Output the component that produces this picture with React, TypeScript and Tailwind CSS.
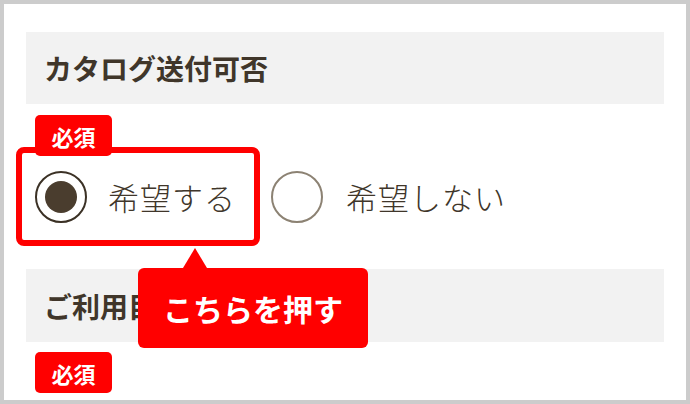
import React, { useState } from 'react';

const font = { fontFamily: '"Noto Sans CJK JP", "Noto Sans", sans-serif' };

const Badge = () => (
  <span className="inline-flex items-center justify-center w-[77px] h-[41px] rounded-[5px] bg-[#ff0000] text-white text-[22px] font-bold leading-none">
    必須
  </span>
);

const Radio = ({ checked }: { checked: boolean }) => (
  <span
    className={`flex items-center justify-center shrink-0 w-[52px] h-[52px] rounded-full border-2 bg-white ${
      checked ? 'border-[#3b3125]' : 'border-[#8c8273]'
    }`}
  >
    {checked && <span className="block w-[32px] h-[32px] rounded-full bg-[#4a3d2e]" />}
  </span>
);

export default function App() {
  const [wish, setWish] = useState(true);

  return (
    <div
      className="relative w-[690px] h-[404px] overflow-hidden border-4 border-[#cccccc] bg-white text-[#40362a]"
      style={font}
    >
      <div className="px-[22px] pt-[28px]">
        {/* カタログ送付可否 */}
        <div className="flex items-center h-[72px] pl-[18px] bg-[#f2f2f2] text-[28px] font-bold leading-none">
          カタログ送付可否
        </div>

        <div className="relative pt-[43px]">
          <div className="absolute top-[11px] left-[9px] z-10">
            <Badge />
          </div>

          <div className="flex items-center">
            <button
              onClick={() => setWish(true)}
              className="flex items-center gap-[21px] -ml-[10px] w-[244px] h-[99px] pl-[13px] border-[6px] border-[#ff0000] rounded-[8px]"
            >
              <Radio checked={wish} />
              <span className="text-[31px] font-light leading-none tracking-[1px]">希望する</span>
            </button>
            <button onClick={() => setWish(false)} className="flex items-center gap-[23px] ml-[11px]">
              <Radio checked={!wish} />
              <span className="text-[31px] font-light leading-none tracking-[1px]">希望しない</span>
            </button>
          </div>

          {/* callout */}
          <div className="absolute left-[112px] top-[144px] z-20 flex flex-col items-start">
            <svg width="24" height="20" viewBox="0 0 24 20" className="ml-[45px] block">
              <polygon points="12,0 24,20 0,20" fill="#ff0000" />
            </svg>
            <div className="flex items-center justify-center w-[230px] h-[80px] rounded-[6px] bg-[#ff0000] text-white text-[30px] font-bold leading-none">
              こちらを押す
            </div>
          </div>

          {/* ご利用目的 */}
          <div className="flex items-center h-[73px] mt-[23px] pl-[18px] bg-[#f2f2f2] text-[28px] font-bold leading-none">
            ご利用目的
          </div>

          <div className="mt-[10px] ml-[9px]">
            <Badge />
          </div>
        </div>
      </div>
    </div>
  );
}
